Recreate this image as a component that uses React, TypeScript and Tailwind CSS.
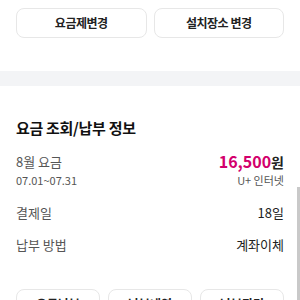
import React from "react";

const font = { fontFamily: '"Noto Sans CJK KR", "Noto Sans", sans-serif' };

const Row = ({ label, value }: { label: string; value: string }) => (
  <div className="flex justify-between items-center text-[13px] leading-[18px]">
    <span className="text-[#555]">{label}</span>
    <span className="text-[#222]">{value}</span>
  </div>
);

export default function App() {
  return (
    <div
      className="relative w-[300px] h-[300px] overflow-hidden bg-white"
      style={font}
    >
      <div className="flex gap-[7px] px-4 pt-2">
        <button className="flex-1 h-[30px] rounded-lg border border-[#e7e7e7] text-[12px] font-bold tracking-[-0.04em] text-[#222]">
          요금제변경
        </button>
        <button className="flex-1 h-[30px] rounded-lg border border-[#e7e7e7] text-[12px] font-bold tracking-[-0.04em] text-[#222]">
          설치장소 변경
        </button>
      </div>

      <div className="mt-[33px] h-[15px] bg-[#f3f4f6]" />

      <div className="px-4">
        <h2 className="mt-[32px] text-[15px] leading-[20px] font-semibold tracking-[-0.02em] text-[#111]">
          요금 조회/납부 정보
        </h2>

        <div className="mt-[14px] flex justify-between items-center">
          <span className="text-[13px] leading-[18px] text-[#555]">8월 요금</span>
          <span className="text-[16px] leading-[18px] font-bold text-[#d3006c]">
            16,500<span className="text-[#222] text-[14px]">원</span>
          </span>
        </div>
        <div className="mt-[1px] flex justify-between items-center text-[11px] leading-[16px] text-[#555]">
          <span>07.01~07.31</span>
          <span>U+ 인터넷</span>
        </div>

        <div className="mt-[16px]">
          <Row label="결제일" value="18일" />
        </div>
        <div className="mt-[14px]">
          <Row label="납부 방법" value="계좌이체" />
        </div>

        <div className="mt-[35px] flex gap-[8px]">
          {["요금납부", "납부내역", "납부관리"].map((t) => (
            <button
              key={t}
              className="flex-1 h-[30px] rounded-lg border border-[#e7e7e7] text-[12px] font-bold text-[#222]"
            >
              {t}
            </button>
          ))}
        </div>
      </div>

      <div className="absolute right-0 top-[187px] w-[3px] h-[113px] bg-[#c9c9c9]" />
    </div>
  );
}
